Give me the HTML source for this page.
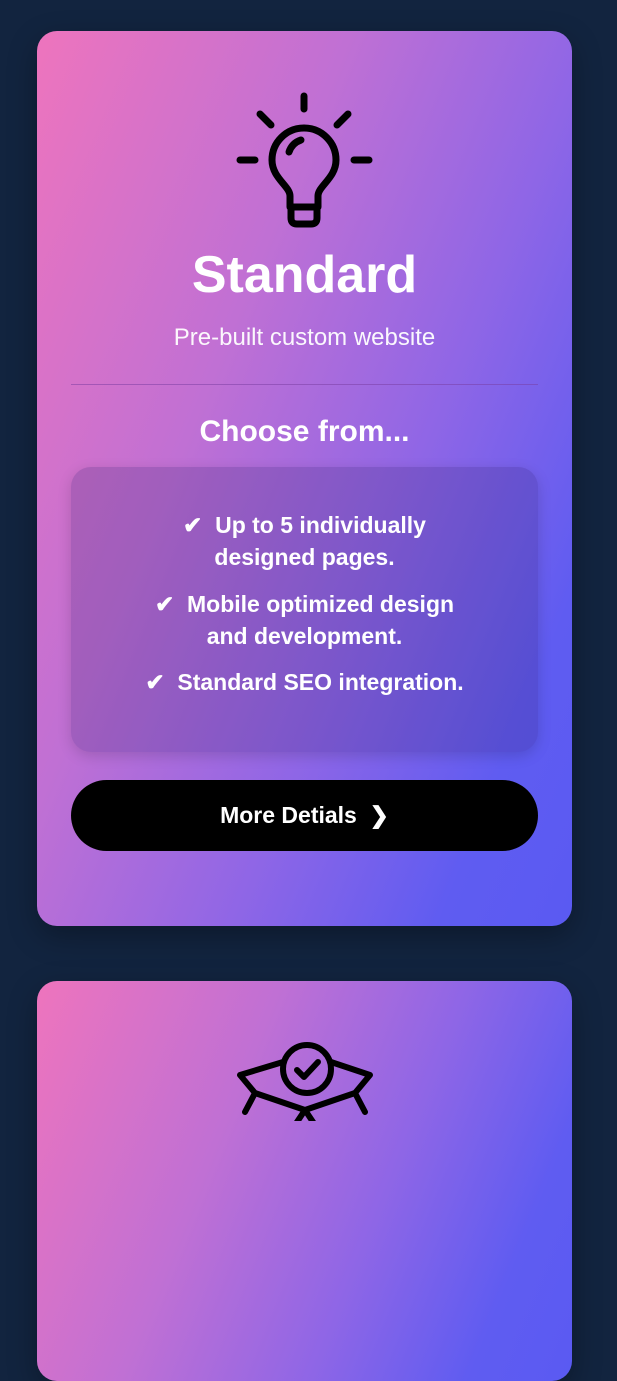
<!DOCTYPE html>
<html><head><style>
html,body{margin:0;padding:0;background:#12243f;width:617px;height:1121px;overflow:hidden;font-family:"Liberation Sans",sans-serif;}
.card{position:absolute;left:37px;width:535px;border-radius:20px;background:linear-gradient(112deg,#ee74bd 0%,#c070d4 35%,#8f66e6 62%,#5f5cf1 85%,#5a5af2 100%);box-shadow:0 10px 30px rgba(0,0,0,.3);}
.t{position:absolute;left:0;width:100%;text-align:center;color:#fff;}
</style></head><body>
<div class="card" style="top:31px;height:895px;">
<svg style="position:absolute;left:0;top:0" width="535" height="220" viewBox="37 31 535 220" fill="none" stroke="#000" stroke-width="7" stroke-linecap="round" stroke-linejoin="round">
<line x1="304" y1="96" x2="304" y2="109"/>
<line x1="240" y1="160" x2="255" y2="160"/>
<line x1="354" y1="160" x2="369" y2="160"/>
<line x1="260" y1="114" x2="271" y2="125"/>
<line x1="348" y1="114" x2="337" y2="125"/>
<path d="M290 207 L290 196 C290 186 272 178 272 160 A32 32 0 0 1 336 160 C336 178 318 186 318 196 L318 207 Z"/>
<path d="M291 207 L291 218 Q291 224 297 224 L311 224 Q317 224 317 218 L317 207"/>
<path d="M289 152 Q292 143 301 140"/>
</svg>
<div class="t" style="top:214px;font-size:52px;font-weight:bold;">Standard</div>
<div class="t" style="top:293px;font-size:24px;opacity:.95">Pre-built custom website</div>
<div style="position:absolute;left:34px;right:34px;top:353px;height:1px;background:rgba(120,60,160,.5)"></div>
<div class="t" style="top:384px;font-size:30px;font-weight:bold;">Choose from...</div>
<div style="position:absolute;left:34px;right:34px;top:436px;height:285px;border-radius:20px;background:rgba(50,30,110,.22);box-shadow:0 4px 14px rgba(0,0,0,.15)"></div>
<div class="t" style="top:478px;font-size:23px;font-weight:bold;line-height:32px;">✔&nbsp; Up to 5 individually<br>designed pages.</div>
<div class="t" style="top:557px;font-size:23px;font-weight:bold;line-height:32px;">✔&nbsp; Mobile optimized design<br>and development.</div>
<div class="t" style="top:635px;font-size:23px;font-weight:bold;line-height:32px;">✔&nbsp; Standard SEO integration.</div>
<div style="position:absolute;left:34px;right:34px;top:749px;height:71px;border-radius:36px;background:#000;color:#fff;text-align:center;line-height:71px;font-size:23px;font-weight:bold;">More Detials&nbsp; ❯</div>
</div>
<div class="card" style="top:981px;height:400px;">
<svg style="position:absolute;left:0;top:0" width="535" height="140" viewBox="37 981 535 140" fill="none" stroke="#000" stroke-width="6" stroke-linecap="round" stroke-linejoin="round">
<circle cx="307" cy="1069" r="24"/>
<path d="M297 1070 L304 1077 L318 1062"/>
<path d="M283 1062 L240 1075 L255 1093 L305 1110 L355 1093 L370 1075 L331 1062"/>
<path d="M255 1093 L245 1112 M355 1093 L365 1112 M305 1110 L295 1125 M305 1110 L315 1125"/>
</svg>
</div>
</body></html>
